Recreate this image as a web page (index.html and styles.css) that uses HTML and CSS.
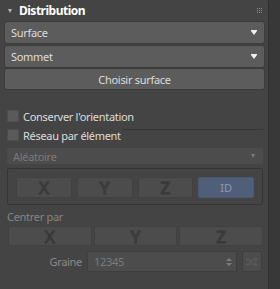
FILE: index.html
```html
<!DOCTYPE html>
<html lang="fr">
<head>
    <meta charset="UTF-8">
    <title>Distribution</title>
    <link rel="stylesheet" href="styles.css">
</head>
<body>
    <div class="rollout">
        <div class="header">
            <span class="caret"></span>
            <span class="title">Distribution</span>
            <span class="grip">
                <i></i><i></i><i></i><i></i><i></i><i></i><i></i><i></i><i></i>
            </span>
        </div>

        <div class="combo combo-first">
            <span>Surface</span>
            <span class="arrow"></span>
        </div>
        <div class="combo combo-second">
            <span>Sommet</span>
            <span class="arrow"></span>
        </div>
        <div class="button">Choisir surface</div>

        <label class="check check-first">
            <span class="box"></span>
            <span>Conserver l'orientation</span>
        </label>

        <div class="group">
            <label class="check group-title">
                <span class="box"></span>
                <span>Réseau par élément</span>
            </label>
            <div class="combo disabled">
                <span>Aléatoire</span>
                <span class="arrow small"></span>
            </div>
            <div class="axis-box">
                <div class="axis">X</div>
                <div class="axis">Y</div>
                <div class="axis">Z</div>
                <div class="axis active">ID</div>
            </div>
        </div>

        <div class="label">Centrer par</div>
        <div class="center-row">
            <div class="axis">X</div>
            <div class="axis">Y</div>
            <div class="axis">Z</div>
        </div>

        <div class="seed-row">
            <span class="seed-label">Graine</span>
            <div class="spinner">
                <span>12345</span>
                <span class="spin">
                    <i class="up"></i>
                    <i class="down"></i>
                </span>
            </div>
            <div class="dice">
                <svg width="12" height="10" viewBox="0 0 12 10">
                    <path d="M0 2.5h3l4 5h3M0 7.5h3l4-5h3" fill="none" stroke="#5a5a5a" stroke-width="1.3"/>
                    <path d="M9 0.5l2 2-2 2M9 5.5l2 2-2 2" fill="none" stroke="#5a5a5a" stroke-width="1.2"/>
                </svg>
            </div>
        </div>
    </div>
</body>
</html>
```

FILE: styles.css
```css
body {
    margin: 0;
    width: 280px;
    height: 289px;
    overflow: hidden;
    background: #383838;
    font-family: 'Noto Sans', sans-serif;
    font-size: 11px;
    letter-spacing: -0.3px;
    color: #dcdcdc;
}

.rollout {
    width: 269px;
    height: 289px;
    background: #444444;
    border-right: 1px solid #303030;
    border-top-right-radius: 3px;
    box-sizing: border-box;
}

.header {
    height: 20px;
    display: flex;
    align-items: center;
    padding-left: 8px;
}

.caret {
    width: 0;
    height: 0;
    border-left: 2.5px solid transparent;
    border-right: 2.5px solid transparent;
    border-top: 4px solid #b4b4b4;
    margin-right: 7px;
    margin-top: 1px;
}

.title {
    font-weight: 700;
    font-size: 12px;
    letter-spacing: -0.5px;
    color: #ffffff;
}

.grip {
    margin-left: auto;
    margin-right: 6px;
    width: 5px;
    display: grid;
    grid-template-columns: repeat(3, 1px);
    gap: 1px;
}

.grip i {
    width: 1px;
    height: 1px;
    background: #8c8c8c;
}

.combo {
    height: 21px;
    margin: 0 4px 0 5px;
    background: #5c5c5c;
    border-radius: 2px;
    box-shadow: 0 0 0 1px #3c3c3c;
    display: flex;
    align-items: center;
    padding: 0 7px 0 6px;
    box-sizing: border-box;
}

.combo-first {
    margin-top: 2px;
}

.combo-second {
    margin-top: 3px;
}

.arrow {
    margin-left: auto;
    width: 6px;
    height: 5px;
    border-top: 1px solid #f0f0f0;
    position: relative;
}

.arrow::after {
    content: '';
    position: absolute;
    left: 0;
    top: 0;
    border-left: 3px solid transparent;
    border-right: 3px solid transparent;
    border-top: 4px solid #f0f0f0;
}

.button {
    height: 20px;
    margin: 2px 4px 0 5px;
    background: #5c5c5c;
    border-radius: 2px;
    box-shadow: 0 0 0 1px #3c3c3c;
    display: flex;
    align-items: center;
    justify-content: center;
}

.check {
    display: flex;
    align-items: center;
    gap: 4px;
    height: 12px;
    padding-left: 7px;
}

.check-first {
    margin-top: 21px;
}

.box {
    width: 12px;
    height: 12px;
    background: #5a5a5a;
    box-shadow: inset 0 0 0 1px #4e4e4e;
}

.group {
    margin: 12px 5px 0 4px;
    position: relative;
    padding-left: 3px;
}

.group::before {
    content: '';
    position: absolute;
    left: 119px;
    right: 0;
    top: 0;
    border-top: 1px solid #363636;
}

.group-title {
    margin-top: -5px;
    margin-left: -3px;
    padding-left: 3px;
    width: fit-content;
}

.combo.disabled {
    height: 16px;
    margin: 7px 0 0 0;
    background: #4c4c4c;
    box-shadow: none;
    color: #7a7a7a;
    padding-left: 6px;
}

.arrow.small {
    width: 5px;
    height: 4px;
    border-top: none;
}

.arrow.small::after {
    border-left-width: 2.5px;
    border-right-width: 2.5px;
    border-top: 4px solid #7a7a7a;
}

.axis-box {
    margin-top: 4px;
    height: 37px;
    border: 1px solid #353535;
    border-radius: 2px;
    box-sizing: border-box;
    display: grid;
    grid-template-columns: repeat(4, 1fr);
    gap: 5px;
    align-items: center;
    padding: 1px 8px 0 8px;
}

.axis {
    height: 21px;
    background: #4c4c4c;
    border: 1px solid #414141;
    border-radius: 2px;
    box-sizing: border-box;
    display: flex;
    align-items: center;
    justify-content: center;
    font-size: 17px;
    letter-spacing: 0;
    color: #4f4f4f;
    -webkit-text-stroke: 1px #363636;
}

.axis.active {
    background: #4f5f79;
    border-color: #4a5872;
    color: #8e9cb0;
    -webkit-text-stroke: 0;
    font-size: 11px;
}

.label {
    margin: 5px 0 0 7px;
    color: #858585;
    height: 14px;
    line-height: 14px;
}

.center-row {
    display: grid;
    grid-template-columns: repeat(3, 1fr);
    gap: 2px;
    margin: 2px 5px 0 8px;
}

.center-row .axis {
    height: 20px;
}

.seed-row {
    display: flex;
    align-items: center;
    margin-top: 5px;
    height: 21px;
}

.seed-label {
    width: 82px;
    text-align: right;
    color: #8a8a8a;
}

.spinner {
    margin-left: 5px;
    width: 150px;
    height: 21px;
    background: #4c4c4c;
    border: 1px solid #3e3e3e;
    border-radius: 2px;
    box-sizing: border-box;
    display: flex;
    align-items: center;
    padding: 0 4px 0 6px;
    color: #7c7c7c;
}

.spin {
    margin-left: auto;
    display: flex;
    flex-direction: column;
    gap: 2px;
}

.spin i {
    width: 0;
    height: 0;
    border-left: 3px solid transparent;
    border-right: 3px solid transparent;
}

.spin .up {
    border-bottom: 3px solid #7c7c7c;
}

.spin .down {
    border-top: 3px solid #7c7c7c;
}

.dice {
    margin-left: 5px;
    width: 20px;
    height: 21px;
    background: #4c4c4c;
    border: 1px solid #3e3e3e;
    border-radius: 2px;
    box-sizing: border-box;
    display: flex;
    align-items: center;
    justify-content: center;
}
```
